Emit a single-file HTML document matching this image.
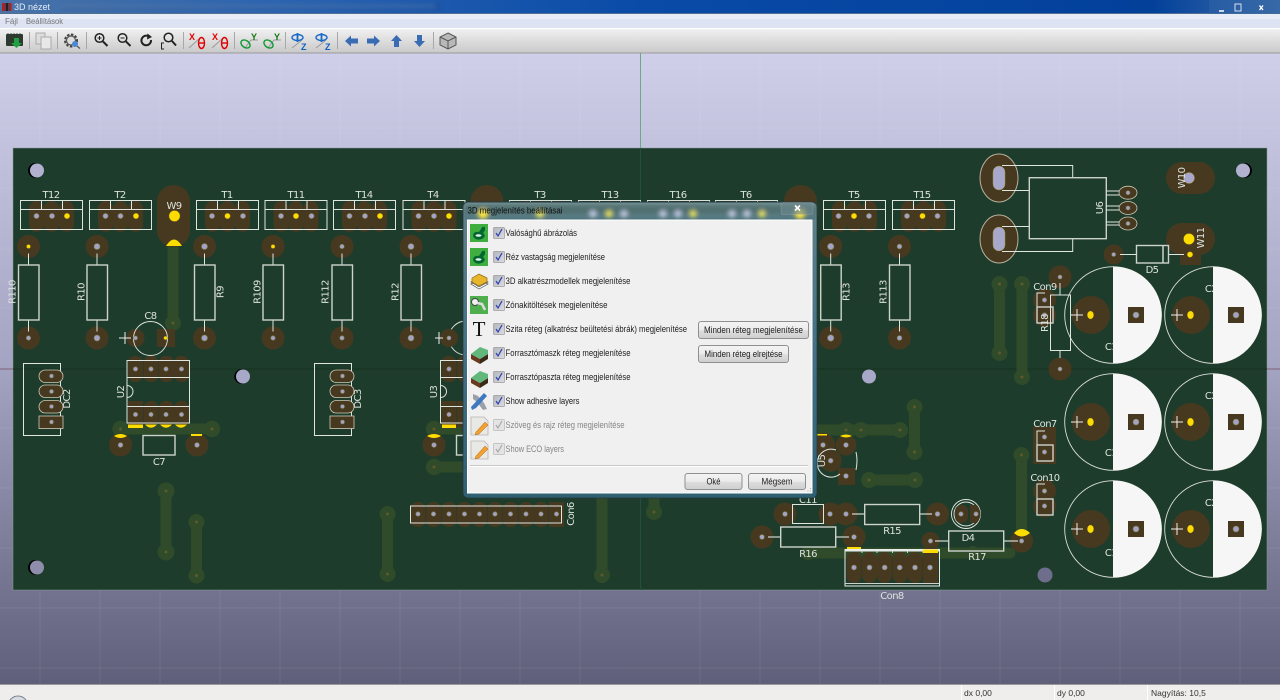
<!DOCTYPE html>
<html><head><meta charset="utf-8"><title>3D nézet</title>
<style>
html,body{margin:0;padding:0;width:1280px;height:700px;overflow:hidden;background:#fff}
svg{display:block}
text{font-family:"Liberation Sans",sans-serif}
.l{font-family:"DejaVu Sans","Liberation Sans",sans-serif;font-size:10px;letter-spacing:-.6px;fill:#dde2dd;text-anchor:middle}
.p{fill:#473920}
.tr{stroke:#2f4b2a;fill:none;stroke-linecap:round}
.v{fill:#2f4b2a}
.s{fill:none;stroke:#dfe5df;stroke-width:1}
.g{fill:none;stroke:#ccd3cc;stroke-width:1.4}
.h{fill:#a3a3c8;stroke:#7d7a45;stroke-width:.6}
.y{fill:#ffdc00;stroke:#8a7a20;stroke-width:.4}
.d{fill:#5f5a2c}
.w{fill:#f6f6f6}
.r{font-size:9px;fill:#1c1c1c}
.rd{font-size:9px;fill:#858585}
.b{font-size:9px;fill:#1c1c1c;text-anchor:middle}
.st{font-size:8.5px;fill:#333}
.sep{stroke:#a8a8a8;stroke-width:1}
</style></head>
<body>
<svg width="1280" height="700" viewBox="0 0 1280 700" xmlns="http://www.w3.org/2000/svg">
<defs>
<linearGradient id="bg" x1="0" y1="0" x2="0" y2="1"><stop offset="0" stop-color="#cfcfe9"/><stop offset=".5" stop-color="#a3a3c2"/><stop offset="1" stop-color="#5f5f7a"/></linearGradient>
<linearGradient id="tb" x1="0" y1="0" x2="0" y2="1"><stop offset="0" stop-color="#f2f2f2"/><stop offset="1" stop-color="#c9c9c9"/></linearGradient>
<linearGradient id="ti" x1="0" y1="0" x2="1" y2="0"><stop offset="0" stop-color="#4a73a8"/><stop offset=".2" stop-color="#2d66b2"/><stop offset=".5" stop-color="#0a4ba8"/><stop offset=".9" stop-color="#02409a"/><stop offset="1" stop-color="#3f6ea8"/></linearGradient>
<linearGradient id="btn" x1="0" y1="0" x2="0" y2="1"><stop offset="0" stop-color="#f4f4f4"/><stop offset=".5" stop-color="#ebebeb"/><stop offset=".55" stop-color="#dcdcdc"/><stop offset="1" stop-color="#cfcfcf"/></linearGradient>
<linearGradient id="gl" x1="0" y1="0" x2="0" y2="1"><stop offset="0" stop-color="#7f9a9e"/><stop offset="1" stop-color="#4f747e"/></linearGradient>
<linearGradient id="side" x1="0" y1="0" x2="0" y2="1"><stop offset="0" stop-color="#62828a"/><stop offset=".5" stop-color="#437084"/><stop offset="1" stop-color="#2f6072"/></linearGradient>
<linearGradient id="cb" x1="0" y1="0" x2="1" y2="1"><stop offset="0" stop-color="#b4b4ba"/><stop offset="1" stop-color="#dcdce4"/></linearGradient>
<filter id="bl" x="-20%" y="-50%" width="140%" height="200%"><feGaussianBlur stdDeviation="2.2"/></filter>
<filter id="bl2" x="-5%" y="-200%" width="110%" height="500%"><feGaussianBlur stdDeviation="2.5"/></filter>

<g id="tp">
<rect class="p" x="9" y="1" width="15" height="31" rx="7.5"/><rect class="p" x="24" y="1" width="15" height="31" rx="7.5"/><rect class="p" x="39" y="1" width="15" height="31" rx="7.5"/>
<rect class="s" x="0.5" y="0.5" width="62" height="29"/><path class="s" d="M0.5 9.5H62.5M21.5 .5V9.5M42.5 .5V9.5"/>
</g>
<g id="res">
<circle class="p" cx="0" cy="0" r="11.5"/><circle class="p" cx="0" cy="91.5" r="11.5"/>
<path class="s" d="M0 7V18.500M0 74V85"/><rect class="g" x="-10" y="18.500" width="20.500" height="55"/>
</g>
<g id="dc">
<rect class="s" x="0.500" y="0.500" width="37" height="72"/>
<rect x="16" y="7" width="24" height="12.500" rx="6.200" fill="#473920" stroke="#cfc9b5" stroke-width=".8"/>
<rect x="16" y="22" width="24" height="12.500" rx="6.200" fill="#473920" stroke="#cfc9b5" stroke-width=".8"/>
<rect x="16" y="37.500" width="24" height="12.500" rx="6.200" fill="#473920" stroke="#cfc9b5" stroke-width=".8"/>
<rect x="16" y="53" width="24" height="12.500" fill="#473920" stroke="#cfc9b5" stroke-width=".8"/>
<circle class="h" cx="28.500" cy="13" r="2"/><circle class="h" cx="28.500" cy="28.500" r="2"/><circle class="h" cx="28.500" cy="43.500" r="2"/><circle class="h" cx="28.500" cy="59" r="2"/>
</g>
<g id="cap">
<circle cx="0" cy="0" r="48.300" fill="none" stroke="#d9dfd9" stroke-width=".9"/>
<path class="w" d="M0 -48.300A48.300 48.300 0 0 1 0 48.300Z"/>
<circle class="p" cx="-22" cy="0" r="19"/>
<path d="M-42 0H-30M-36 -6V6" stroke="#eef0ee" stroke-width="1" fill="none"/>
<ellipse cx="-22.500" cy="0" rx="3.200" ry="4" class="y"/>
<rect class="p" x="15" y="-8" width="16" height="16"/><circle class="h" cx="23" cy="0" r="3"/>
</g>
<g id="cb1"><rect x="-5.500" y="-5.500" width="11" height="11" rx="1" fill="url(#cb)" stroke="#9a9a9a" stroke-width=".7"/><path d="M-3 0L-1 3L3 -4" fill="none" stroke="#2a3fb0" stroke-width="1.200"/></g>
<g id="cb2"><rect x="-5.500" y="-5.500" width="11" height="11" rx="1" fill="#e4e4e4" stroke="#b8b8b8" stroke-width=".7"/><path d="M-3 0L-1 3L3 -4" fill="none" stroke="#a8a8a8" stroke-width="1.200"/></g>
<g id="gic"><rect width="18" height="18" fill="#3fae3f"/><path d="M3 12Q3 7 9 8L11 5Q12 2 15 3L15 6Q14 8 13 9Q17 12 12 15Q5 17 3 12Z" fill="#063"/><ellipse cx="8.500" cy="11.500" rx="3" ry="1.300" fill="#e8f4e8"/></g>
<g id="lay"><path d="M1 10L10 15V20L1 15Z" fill="#6a3a20"/><path d="M10 15L18 10V15L10 20Z" fill="#3a2a1a"/><path d="M1 10L10 3L18 6L18 10L10 15Z" fill="#62b77b"/></g>
<g id="pen"><path d="M1 1H14L18 5V19H1Z" fill="#e8e8e4" stroke="#b4b4b0" stroke-width=".8"/><path d="M6 16L15 6L18 9L9 18L5 19Z" fill="#f0a030" stroke="#c06820" stroke-width=".5"/></g>
</defs>

<!-- background -->
<rect x="0" y="53" width="1280" height="632" fill="url(#bg)"/>
<g stroke="#ffffff" stroke-opacity=".07" stroke-width="1">
<path d="M40 53V685M100 53V685M160 53V685M220 53V685M280 53V685M340 53V685M400 53V685M460 53V685M520 53V685M580 53V685M700 53V685M760 53V685M820 53V685M880 53V685M940 53V685M1000 53V685M1060 53V685M1120 53V685M1180 53V685M1240 53V685"/>
<path d="M0 68H1280M0 128H1280M0 188H1280M0 248H1280M0 308H1280M0 428H1280M0 488H1280M0 548H1280M0 608H1280M0 668H1280"/>
</g>
<path d="M640.500 53V148" stroke="#6ea886" stroke-width="1"/>

<!-- board -->
<rect x="13" y="148" width="1254" height="442" fill="#1e3c2b" stroke="#8a9a98" stroke-width=".5"/>
<path d="M640.500 148V590" stroke="#23503a" stroke-width="1"/>
<path d="M0 369H13" stroke="#806070" stroke-width="1"/><path d="M13 369H1267" stroke="#16301f" stroke-width="1"/><path d="M1267 369H1280" stroke="#806070" stroke-width="1"/>

<!-- mounting holes -->
<g>
<circle cx="35.500" cy="170.500" r="7.500" fill="#000"/><circle cx="37" cy="170.500" r="7" fill="#b2b2d0"/>
<circle cx="241.500" cy="376.500" r="7.300" fill="#000"/><circle cx="243" cy="376.500" r="7" fill="#a8a8c8"/>
<circle cx="35.500" cy="567.500" r="7.500" fill="#000"/><circle cx="37" cy="567.500" r="7" fill="#8e8eac"/>
<circle cx="1244.500" cy="170.500" r="7.500" fill="#000"/><circle cx="1243" cy="170.500" r="7" fill="#b2b2d0"/>
<circle cx="869" cy="376.500" r="7" fill="#a8a8c8"/>
<circle cx="1045" cy="575" r="7.500" fill="#6e6e8c"/>
</g>

<!-- traces -->
<g class="tr" stroke-width="11">
<path d="M173 245V323"/><path d="M120.500 429H212"/><path d="M434 429H470"/><path d="M434 467H470"/>
<path d="M817 430H900"/><path d="M914.500 407V452"/><path d="M869 480H915"/>
<path d="M166 491V552"/><path d="M196.500 522V575.500"/><path d="M387.500 514V574"/><path d="M602 497V575"/>
<path d="M999.500 284V353"/><path d="M1022 284V377"/><path d="M1021.500 455V535"/><path d="M808 553H1010"/>
<path d="M654 497V512"/>
</g>
<g class="v">
<circle cx="173" cy="323" r="8"/><circle cx="120.500" cy="429" r="8.200"/><circle cx="212" cy="429" r="8.200"/><circle cx="434" cy="429" r="8.200"/><circle cx="434" cy="467" r="8.200"/>
<circle cx="846" cy="430" r="8"/><circle cx="861" cy="430" r="8"/><circle cx="900" cy="430" r="8"/><circle cx="914.500" cy="407" r="8"/><circle cx="914.500" cy="452" r="8"/>
<circle cx="869" cy="480" r="8"/><circle cx="915" cy="480" r="8"/><circle cx="166" cy="491" r="8.500"/><circle cx="166" cy="552" r="8.500"/>
<circle cx="196.500" cy="522" r="8"/><circle cx="196.500" cy="575.500" r="8"/><circle cx="387.500" cy="514" r="8"/><circle cx="387.500" cy="574" r="8"/>
<circle cx="602" cy="575" r="8"/><circle cx="654" cy="512" r="8"/>
<circle cx="999.500" cy="284" r="8"/><circle cx="999.500" cy="353" r="8"/><circle cx="1022" cy="284" r="8"/><circle cx="1022" cy="377" r="8"/><circle cx="1021.500" cy="455" r="8"/><circle cx="808" cy="553" r="7"/>
<circle cx="973" cy="553" r="7"/>
</g>
<g class="d">
<circle cx="173" cy="323" r="1.500"/><circle cx="120.500" cy="429" r="1.500"/><circle cx="212" cy="429" r="1.500"/><circle cx="434" cy="429" r="1.500"/><circle cx="434" cy="467" r="1.500"/>
<circle cx="846" cy="430" r="1.500"/><circle cx="861" cy="430" r="1.500"/><circle cx="900" cy="430" r="1.500"/><circle cx="914.500" cy="407" r="1.500"/><circle cx="914.500" cy="452" r="1.500"/>
<circle cx="869" cy="480" r="1.500"/><circle cx="915" cy="480" r="1.500"/><circle cx="166" cy="491" r="1.500"/><circle cx="166" cy="552" r="1.500"/>
<circle cx="196.500" cy="522" r="1.500"/><circle cx="196.500" cy="575.500" r="1.500"/><circle cx="387.500" cy="514" r="1.500"/><circle cx="387.500" cy="574" r="1.500"/>
<circle cx="602" cy="575" r="1.500"/><circle cx="654" cy="512" r="1.500"/>
<circle cx="999.500" cy="284" r="1.500"/><circle cx="999.500" cy="353" r="1.500"/><circle cx="1022" cy="284" r="1.500"/><circle cx="1022" cy="377" r="1.500"/><circle cx="1021.500" cy="455" r="1.500"/>
</g>

<!-- big pills -->
<rect class="p" x="157" y="185" width="33" height="62" rx="16.500"/>
<rect class="p" x="470.500" y="185" width="33" height="62" rx="16.500"/>
<rect class="p" x="784" y="185" width="33" height="62" rx="16.500"/>
<circle cx="174.500" cy="216" r="5.500" class="y"/>
<path d="M166 246Q174 233 182 246Z" fill="#ffdc00"/>
<text class="l" x="174" y="209">W9</text>

<!-- T packages -->
<use href="#tp" x="20" y="200"/><use href="#tp" x="89" y="200"/><use href="#tp" x="196" y="200"/><use href="#tp" x="264.500" y="200"/><use href="#tp" x="333" y="200"/><use href="#tp" x="402.500" y="200"/><use href="#tp" x="509" y="200"/><use href="#tp" x="578" y="200"/><use href="#tp" x="647" y="200"/><use href="#tp" x="715" y="200"/><use href="#tp" x="823" y="200"/><use href="#tp" x="892" y="200"/>
<g>
<circle class="h" cx="36.500" cy="216" r="2.600"/><circle class="h" cx="52" cy="216" r="2.600"/><circle class="y" cx="67" cy="216" r="2.800"/>
<circle class="h" cx="105.500" cy="216" r="2.600"/><circle class="h" cx="120.500" cy="216" r="2.600"/><circle class="y" cx="136" cy="216" r="2.800"/>
<circle class="h" cx="212" cy="216" r="2.600"/><circle class="y" cx="227.500" cy="216" r="2.800"/><circle class="h" cx="243" cy="216" r="2.600"/>
<circle class="h" cx="281" cy="216" r="2.600"/><circle class="y" cx="296" cy="216" r="2.800"/><circle class="h" cx="311.500" cy="216" r="2.600"/>
<circle class="h" cx="349.500" cy="216" r="2.600"/><circle class="h" cx="365" cy="216" r="2.600"/><circle class="y" cx="380" cy="216" r="2.800"/>
<circle class="h" cx="418.500" cy="216" r="2.600"/><circle class="h" cx="434" cy="216" r="2.600"/><circle class="y" cx="449" cy="216" r="2.800"/>
<circle class="h" cx="838.500" cy="216" r="2.600"/><circle class="y" cx="854" cy="216" r="2.800"/><circle class="h" cx="869" cy="216" r="2.600"/>
<circle class="h" cx="907" cy="216" r="2.600"/><circle class="y" cx="922.500" cy="216" r="2.800"/><circle class="h" cx="937.500" cy="216" r="2.600"/>
</g>
<g>
<text class="l" x="51" y="198">T12</text><text class="l" x="120" y="198">T2</text><text class="l" x="227" y="198">T1</text><text class="l" x="296" y="198">T11</text><text class="l" x="364" y="198">T14</text><text class="l" x="433" y="198">T4</text><text class="l" x="540" y="198">T3</text><text class="l" x="610" y="198">T13</text><text class="l" x="678" y="198">T16</text><text class="l" x="746" y="198">T6</text><text class="l" x="854" y="198">T5</text><text class="l" x="922" y="198">T15</text>
</g>

<!-- resistors -->
<use href="#res" x="28.500" y="246.500"/><use href="#res" x="97" y="246.500"/><use href="#res" x="204.500" y="246.500"/><use href="#res" x="273" y="246.500"/><use href="#res" x="342" y="246.500"/><use href="#res" x="411" y="246.500"/><use href="#res" x="830.700" y="246.500"/><use href="#res" x="899.500" y="246.500"/>
<g>
<circle class="y" cx="28.500" cy="246.500" r="2"/><circle class="h" cx="28.500" cy="338" r="2.200"/>
<circle class="h" cx="97" cy="246.500" r="3"/><circle class="h" cx="97" cy="338" r="3"/>
<circle class="h" cx="204.500" cy="246.500" r="3"/><circle class="h" cx="204.500" cy="338" r="3"/>
<circle class="y" cx="273" cy="246.500" r="2"/><circle class="h" cx="273" cy="338" r="2.200"/>
<circle class="h" cx="342" cy="246.500" r="2.200"/><circle class="h" cx="342" cy="338" r="2.200"/>
<circle class="h" cx="411" cy="246.500" r="3"/><circle class="h" cx="411" cy="338" r="3"/>
<circle class="h" cx="830.700" cy="246.500" r="3.200"/><circle class="h" cx="830.700" cy="338" r="3.200"/>
<circle class="h" cx="899.500" cy="246.500" r="2.400"/><circle class="h" cx="899.500" cy="338" r="2.400"/>
</g>
<g>
<text class="l" transform="translate(15.500,292) rotate(-90)">R110</text>
<text class="l" transform="translate(84.500,292) rotate(-90)">R10</text>
<text class="l" transform="translate(223.500,292) rotate(-90)">R9</text>
<text class="l" transform="translate(260.500,292) rotate(-90)">R109</text>
<text class="l" transform="translate(328.500,292) rotate(-90)">R112</text>
<text class="l" transform="translate(398.500,292) rotate(-90)">R12</text>
<text class="l" transform="translate(849.500,292) rotate(-90)">R13</text>
<text class="l" transform="translate(886.500,292) rotate(-90)">R113</text>
</g>

<!-- C8 -->
<path class="p" d="M157 329H175V347H157Z"/><circle class="p" cx="135.500" cy="338" r="9"/>
<circle cx="150.500" cy="338.500" r="17" fill="none" stroke="#dfe5df" stroke-width=".9"/>
<path d="M119 338H131M125 332V344" stroke="#eef0ee" stroke-width="1"/>
<circle class="h" cx="135.500" cy="338" r="2"/><circle class="y" cx="165.500" cy="338" r="1.800"/>
<text class="l" x="150.500" y="319">C8</text>

<!-- U2 -->
<g>
<rect class="p" x="128" y="356" width="15" height="26" rx="7"/><rect class="p" x="143.500" y="356" width="15" height="26" rx="7"/><rect class="p" x="159" y="356" width="15" height="26" rx="7"/><rect class="p" x="174" y="356" width="15" height="26" rx="7"/>
<rect class="p" x="128" y="401" width="15" height="26"/><rect class="p" x="143.500" y="401" width="15" height="26" rx="7"/><rect class="p" x="159" y="401" width="15" height="26" rx="7"/><rect class="p" x="174" y="401" width="15" height="26" rx="7"/>
<rect class="s" x="127" y="360.500" width="62.500" height="62.500"/><path class="s" d="M127 377.500H189.500M127 406.500H189.500"/>
<path class="s" d="M127 385.500A6 6 0 0 1 127 397.500"/>
<rect x="128" y="424.500" width="15" height="3.500" fill="#ffdc00"/><path d="M145 424.500H157Q151 431 145 424.500ZM160 424.500H172Q166 431 160 424.500ZM175 424.500H187Q181 431 175 424.500Z" fill="#ffdc00"/>
<circle class="h" cx="135.500" cy="369" r="2.200"/><circle class="h" cx="151" cy="369" r="2.200"/><circle class="h" cx="166" cy="369" r="2.200"/><circle class="h" cx="181.500" cy="369" r="2.200"/>
<circle class="h" cx="135.500" cy="414.500" r="2.200"/><circle class="h" cx="151" cy="414.500" r="2.200"/><circle class="h" cx="166" cy="414.500" r="2.200"/><circle class="h" cx="181.500" cy="414.500" r="2.200"/>
<text class="l" transform="translate(124,392) rotate(-90)">U2</text>
</g>
<use href="#dc" x="23" y="363"/><text class="l" transform="translate(70,399) rotate(-90)">DC2</text>
<use href="#dc" x="314" y="363"/><text class="l" transform="translate(361,399) rotate(-90)">DC3</text>

<!-- C7 -->
<circle class="p" cx="120.500" cy="445" r="11.500"/><circle class="p" cx="197" cy="445" r="11.500"/>
<path d="M114 436Q120.500 432 127 436Q120.500 440 114 436Z" fill="#ffdc00"/><rect x="191" y="434" width="11" height="2" fill="#ffdc00"/>
<rect class="g" x="143" y="435.500" width="32" height="19.500"/>
<circle class="h" cx="120.500" cy="445" r="2.400"/><circle class="h" cx="197" cy="445" r="2.400"/>
<text class="l" x="159" y="465">C7</text>

<!-- U3 area -->
<circle cx="466" cy="338" r="17" fill="none" stroke="#dfe5df" stroke-width=".9"/>
<circle class="p" cx="449" cy="338" r="9"/>
<path d="M435 338H443M439 332V344" stroke="#eef0ee" stroke-width="1"/>
<circle class="h" cx="449" cy="338" r="2"/>
<rect class="p" x="441.500" y="356" width="15" height="26" rx="7"/><rect class="p" x="441.500" y="401" width="15" height="26"/><rect class="p" x="457" y="356" width="15" height="26" rx="7"/><rect class="p" x="457" y="401" width="15" height="26"/>
<rect class="s" x="440.500" y="360.500" width="40" height="62.500"/><path class="s" d="M440.500 377.500H480M440.500 406.500H480"/>
<path class="s" d="M440.500 385.500A6 6 0 0 1 440.500 397.500"/>
<circle class="h" cx="449" cy="369" r="2.200"/><circle class="h" cx="449" cy="414.500" r="2.200"/>
<text class="l" transform="translate(437,392) rotate(-90)">U3</text>
<rect x="442" y="424.500" width="14" height="3.500" fill="#ffdc00"/>
<circle class="p" cx="434" cy="445" r="11.500"/>
<path d="M427 436Q434 432 441 436Q434 440 427 436Z" fill="#ffdc00"/>
<circle class="h" cx="434" cy="445" r="2.400"/>
<rect class="g" x="456.500" y="435.500" width="20" height="19.500"/>

<!-- Con6 -->
<g>
<rect class="p" x="410.500" y="502" width="15" height="25" rx="7"/><rect class="p" x="426" y="502" width="15" height="25" rx="7"/><rect class="p" x="441.500" y="502" width="15" height="25" rx="7"/><rect class="p" x="457" y="502" width="15" height="25" rx="7"/><rect class="p" x="472" y="502" width="15" height="25" rx="7"/><rect class="p" x="487.500" y="502" width="15" height="25" rx="7"/><rect class="p" x="503" y="502" width="15" height="25" rx="7"/><rect class="p" x="518.500" y="502" width="15" height="25" rx="7"/><rect class="p" x="533.500" y="502" width="15" height="25" rx="7"/><rect class="p" x="549" y="502" width="15" height="25"/>
<rect class="s" x="410.500" y="506" width="151" height="17"/>
<circle class="h" cx="418" cy="514" r="2.200"/><circle class="h" cx="433.500" cy="514" r="2.200"/><circle class="h" cx="449" cy="514" r="2.200"/><circle class="h" cx="464.500" cy="514" r="2.200"/><circle class="h" cx="479.500" cy="514" r="2.200"/><circle class="h" cx="495" cy="514" r="2.200"/><circle class="h" cx="510.500" cy="514" r="2.200"/><circle class="h" cx="526" cy="514" r="2.200"/><circle class="h" cx="541" cy="514" r="2.200"/><circle class="h" cx="556.500" cy="514" r="2.200"/>
<text class="l" transform="translate(574,514) rotate(-90)">Con6</text>
</g>

<!-- U5 region -->
<circle class="p" cx="823" cy="445" r="12"/><circle class="p" cx="846" cy="445" r="10.500"/><circle class="p" cx="830.700" cy="460.700" r="11"/><rect class="p" x="838" y="468" width="17" height="17"/>
<rect x="817" y="434" width="10" height="1.500" fill="#ffdc00"/><path d="M840 436Q846 433 852 436Q846 439 840 436Z" fill="#ffdc00"/>
<path class="s" d="M836 450A14 14 0 1 0 840 474M856 452Q858 460 856 470" />
<circle class="h" cx="823" cy="445" r="2.400"/><circle class="h" cx="846" cy="445" r="2.400"/><circle class="h" cx="830.700" cy="460.700" r="2.400"/><circle class="h" cx="846" cy="476" r="2.400"/>
<text class="l" transform="translate(825,461) rotate(-90)">U5</text>

<!-- C11, R15, D4, R16, R17 -->
<circle class="p" cx="785" cy="514" r="11.500"/><circle class="p" cx="830" cy="514" r="11.500"/><circle class="p" cx="846" cy="514" r="11.500"/><circle class="p" cx="937.500" cy="514" r="11.500"/>
<rect class="s" x="792.500" y="504.500" width="31" height="19"/>
<text class="l" x="808" y="503">C11</text>
<rect class="g" x="864.700" y="504.500" width="55" height="20"/><path d="M852 514H864M920 514H932" stroke="#ccd3cc" stroke-width="1.200"/>
<text class="l" x="892" y="534">R15</text>
<circle class="h" cx="785" cy="514" r="2.400"/><circle class="h" cx="830" cy="514" r="2.400"/><circle class="h" cx="846" cy="514" r="2.400"/><circle class="h" cx="937.500" cy="514" r="2.400"/>
<circle cx="966" cy="514" r="14.500" fill="none" stroke="#e4e9e4" stroke-width=".9"/><circle cx="966" cy="514" r="12" fill="none" stroke="#e4e9e4" stroke-width=".9"/>
<rect class="p" x="955" y="505" width="13" height="18" rx="6"/><path class="p" d="M970 505H977Q984 514 977 523H970Z"/>
<circle class="h" cx="961" cy="514" r="2.200"/><circle class="h" cx="976" cy="514" r="2.200"/>
<text class="l" x="968" y="541">D4</text>
<circle class="p" cx="930.500" cy="541" r="9"/><circle class="p" cx="1021.600" cy="541" r="11.500"/>
<path d="M935 541H949M1004 541H1018" stroke="#ccd3cc" stroke-width="1.200"/>
<rect class="g" x="948.700" y="531" width="55" height="20"/>
<circle class="h" cx="930.500" cy="541" r="2.200"/><circle class="h" cx="1021.600" cy="541" r="2.200"/>
<path d="M1014 533Q1021.600 525 1030 533Q1021.600 540 1014 533Z" fill="#ffdc00"/>
<text class="l" x="977" y="560">R17</text>
<circle class="p" cx="762" cy="537" r="11.500"/><circle class="p" cx="854" cy="537" r="11.500"/>
<path d="M768 537H781M836 537H849" stroke="#aeb6ae" stroke-width="1.600"/>
<rect class="g" x="780.700" y="527" width="55" height="20"/>
<circle class="h" cx="762" cy="537" r="2.400"/><circle class="h" cx="854" cy="537" r="2.400"/>
<text class="l" x="808" y="557">R16</text>

<!-- Con8 -->
<g>
<rect class="p" x="846.500" y="552" width="15" height="31" rx="7.500"/><rect class="p" x="862" y="552" width="15" height="31" rx="7.500"/><rect class="p" x="877" y="552" width="15" height="31" rx="7.500"/><rect class="p" x="892.500" y="552" width="15" height="31" rx="7.500"/><rect class="p" x="907.500" y="552" width="15" height="31" rx="7.500"/><rect class="p" x="923" y="552" width="15" height="31"/>
<rect x="845" y="549.500" width="94.500" height="36.500" fill="none" stroke="#e8ece8" stroke-width="1"/><path d="M845 550.500H939.500" stroke="#e8ece8" stroke-width="2"/><path d="M845 583.500H939.500" stroke="#ccd3cc" stroke-width="1"/>
<path d="M862 549V553M877 549V553M892.500 549V553M907.500 549V553M923 549V553" stroke="#e8ece8" stroke-width=".8"/>
<rect x="923" y="549.500" width="15" height="3.500" fill="#ffdc00"/><rect x="847" y="547" width="14" height="2" fill="#ffdc00"/>
<circle class="h" cx="854" cy="567.500" r="2.500"/><circle class="h" cx="869.500" cy="567.500" r="2.500"/><circle class="h" cx="884.700" cy="567.500" r="2.500"/><circle class="h" cx="899.700" cy="567.500" r="2.500"/><circle class="h" cx="915" cy="567.500" r="2.500"/><circle class="h" cx="930" cy="567.500" r="2.500"/>
<text class="l" x="892" y="599">Con8</text>
</g>

<!-- U6 -->
<g>
<ellipse class="p" cx="999" cy="178" rx="19" ry="24" stroke="#b8b2a0" stroke-width="1"/>
<ellipse class="p" cx="999" cy="239" rx="19" ry="24" stroke="#b8b2a0" stroke-width="1"/>
<rect x="993" y="166" width="12" height="24" rx="6" fill="#a8a8cc" stroke="#a09030" stroke-width=".5"/>
<rect x="993" y="227" width="12" height="24" rx="6" fill="#a8a8cc" stroke="#a09030" stroke-width=".5"/>
<path class="s" d="M1002 165.500H1072.700V177.700M1002 190.500H1029.300M1002 251.500H1072.700V239M1002 226.500H1029.300"/>
<rect class="g" x="1029.300" y="177.700" width="77" height="61"/>
<ellipse class="p" cx="1128" cy="192.700" rx="9" ry="6.500" stroke="#cfc9b5" stroke-width=".8"/>
<ellipse class="p" cx="1128" cy="208" rx="9" ry="6.500" stroke="#cfc9b5" stroke-width=".8"/>
<ellipse class="p" cx="1128" cy="223.500" rx="9" ry="6.500" stroke="#cfc9b5" stroke-width=".8"/>
<path class="s" d="M1106 191H1119M1106 195H1119M1106 206H1119M1106 210H1119M1106 222H1119M1106 225H1119"/>
<circle class="h" cx="1128" cy="192.700" r="2"/><circle class="h" cx="1128" cy="208" r="2"/><circle class="h" cx="1128" cy="223.500" r="2"/>
<text class="l" transform="translate(1103,208) rotate(-90)">U6</text>
</g>

<!-- W10 W11 D5 -->
<rect class="p" x="1166" y="162" width="49" height="32" rx="16"/>
<circle cx="1189" cy="178" r="5.500" fill="#a8a8cc" stroke="#a09030" stroke-width=".5"/>
<text class="l" transform="translate(1185,178) rotate(-90)">W10</text>
<rect class="p" x="1166" y="223" width="49" height="32" rx="16"/>
<rect class="p" x="1180" y="250" width="21" height="15"/>
<circle cx="1189" cy="239" r="5.500" class="y"/><circle cx="1190" cy="254.500" r="2.800" class="y"/>
<text class="l" transform="translate(1204,238) rotate(-90)">W11</text>
<circle class="p" cx="1113.700" cy="254.500" r="10"/>
<circle class="h" cx="1113.700" cy="254.500" r="2"/>
<path class="s" d="M1120 254.500H1137M1168 254.500H1184"/>
<rect class="g" x="1136.500" y="245.500" width="32" height="17.500"/><path d="M1163 245.500V263" stroke="#ccd3cc" stroke-width="1.500"/>
<text class="l" x="1152" y="273">D5</text>

<!-- R18 + Con9 -->
<circle class="p" cx="1060" cy="277" r="11.500"/><circle class="p" cx="1060" cy="369" r="11.500"/>
<circle class="p" cx="1044.500" cy="300" r="11.500"/><circle class="p" cx="1044.500" cy="315" r="11.500"/>
<path class="s" d="M1060 283V295M1060 351V358"/>
<path class="s" d="M1037 307V293H1045M1037 307"/>
<rect class="g" x="1037" y="307" width="16" height="16"/>
<circle class="h" cx="1044.500" cy="300" r="2.200"/><circle class="h" cx="1044.500" cy="315" r="2.200"/>
<circle class="h" cx="1060" cy="277" r="2"/><circle class="h" cx="1060" cy="369" r="2"/>
<text class="l" x="1045" y="290">Con9</text>

<!-- big caps -->
<use href="#cap" x="1113" y="315"/><use href="#cap" x="1213" y="315"/><use href="#cap" x="1113" y="422"/><use href="#cap" x="1213" y="422"/><use href="#cap" x="1113" y="529"/><use href="#cap" x="1213" y="529"/>
<rect class="s" x="1050.500" y="295" width="20" height="55.500"/>
<text class="l" transform="translate(1048,323) rotate(-90)">R18</text>
<g>
<text class="l" x="1111" y="350">C1</text><text class="l" x="1211" y="292">C2</text>
<text class="l" x="1111" y="456">C1</text><text class="l" x="1211" y="399">C2</text>
<text class="l" x="1111" y="556">C1</text><text class="l" x="1211" y="506">C2</text>
</g>
<path class="w" d="M1113.500 266.700A48.300 48.300 0 0 1 1113.500 363.300ZM1213.500 266.700A48.300 48.300 0 0 1 1213.500 363.300ZM1113.500 373.700A48.300 48.300 0 0 1 1113.500 470.300ZM1213.500 373.700A48.300 48.300 0 0 1 1213.500 470.300ZM1113.500 480.700A48.300 48.300 0 0 1 1113.500 577.300ZM1213.500 480.700A48.300 48.300 0 0 1 1213.500 577.300Z"/>
<g>
<rect class="p" x="1128" y="307" width="16" height="16"/><circle class="h" cx="1136" cy="315" r="3"/>
<rect class="p" x="1228" y="307" width="16" height="16"/><circle class="h" cx="1236" cy="315" r="3"/>
<rect class="p" x="1128" y="414" width="16" height="16"/><circle class="h" cx="1136" cy="422" r="3"/>
<rect class="p" x="1228" y="414" width="16" height="16"/><circle class="h" cx="1236" cy="422" r="3"/>
<rect class="p" x="1128" y="521" width="16" height="16"/><circle class="h" cx="1136" cy="529" r="3"/>
<rect class="p" x="1228" y="521" width="16" height="16"/><circle class="h" cx="1236" cy="529" r="3"/>
</g>

<!-- Con7 Con10 -->
<rect class="p" x="1033" y="427" width="23" height="37"/>
<path class="s" d="M1037 445V431H1045"/><rect class="g" x="1037" y="445" width="16" height="16"/>
<circle class="h" cx="1044.500" cy="437" r="2.200"/><circle class="h" cx="1044.500" cy="452" r="2.200"/>
<text class="l" x="1045" y="427">Con7</text>
<circle class="p" cx="1044.500" cy="491" r="11.500"/><circle class="p" cx="1044.500" cy="506" r="11.500"/>
<path class="s" d="M1037 499V484H1045"/><rect class="g" x="1037" y="499" width="16" height="16"/>
<circle class="h" cx="1044.500" cy="491" r="2.200"/><circle class="h" cx="1044.500" cy="506" r="2.200"/>
<text class="l" x="1045" y="481">Con10</text>

<!-- DIALOG -->
<rect x="463" y="202" width="354" height="296" rx="5" fill="url(#side)" stroke="#26343c" stroke-width=".7"/>
<rect x="464" y="203" width="352" height="17" rx="4" fill="url(#gl)"/>
<g filter="url(#bl)">
<rect x="464" y="204" width="352" height="10" fill="#3a5a55" opacity=".55"/>
<circle cx="483" cy="214" r="5" fill="#ffe640"/><circle cx="540" cy="214" r="4" fill="#e6e060"/><circle cx="593" cy="214" r="3.500" fill="#c0c8e0"/><circle cx="609" cy="214" r="3.500" fill="#e6e060"/><circle cx="624" cy="214" r="3.500" fill="#c0c8e0"/><circle cx="663" cy="214" r="3.500" fill="#c0c8e0"/><circle cx="678" cy="214" r="3.500" fill="#c0c8e0"/><circle cx="693" cy="214" r="3.500" fill="#e6e060"/><circle cx="732" cy="214" r="3.500" fill="#c0c8e0"/><circle cx="747" cy="214" r="3.500" fill="#c0c8e0"/><circle cx="762" cy="214" r="3.500" fill="#e6e060"/><circle cx="800" cy="214" r="5" fill="#ffe640"/>
</g>
<text x="467.500" y="213.500" style="font-size:9px;fill:#111" textLength="95" lengthAdjust="spacingAndGlyphs">3D megjelenítés beállításai</text>
<rect x="781" y="202.500" width="32" height="12" rx="2" fill="#6f8a90" opacity=".6" stroke="#cfd8da" stroke-width=".5" stroke-opacity=".6"/>
<path d="M795 205.500L800 210.500M800 205.500L795 210.500" stroke="#fff" stroke-width="1.600"/>
<rect x="467.500" y="220" width="344.500" height="273" fill="#f0f0f0" stroke="#fff" stroke-width="1"/>

<!-- dialog icons -->
<use href="#gic" x="470" y="224"/><use href="#gic" x="470" y="248"/>
<g transform="translate(470,272)"><path d="M1 12L9 8L18 12L9 17Z" fill="#fff" stroke="#555" stroke-width=".7"/><path d="M1 10L9 6L18 10L9 15Z" fill="#fff" stroke="#555" stroke-width=".7"/><path d="M2 6L9 2L17 6V10L9 14L2 10Z" fill="#e9b52a" stroke="#8a6a10" stroke-width=".7"/></g>
<g transform="translate(470,296)"><rect width="18" height="18" fill="#4faf4f"/><circle cx="5" cy="6" r="3.500" fill="#f0f0f0" stroke="#444"/><path d="M7 7L12 8L15 14" fill="none" stroke="#ddd" stroke-width="2.500"/></g>
<text x="479" y="336" style="font-family:'Liberation Serif',serif;font-size:21px;fill:#111;text-anchor:middle">T</text>
<use href="#lay" x="470" y="344"/><use href="#lay" x="470" y="368"/>
<g transform="translate(470,392)"><path d="M3 2L8 4L14 11L17 17L13 18L7 10L3 7Z" fill="#9aa0a8"/><path d="M14 1L17 4L6 16L2 18L1 15Z" fill="#3e78c0"/></g>
<use href="#pen" x="470" y="416"/><use href="#pen" x="470" y="440"/>

<!-- checkboxes -->
<use href="#cb1" x="499" y="233"/><use href="#cb1" x="499" y="257"/><use href="#cb1" x="499" y="281"/><use href="#cb1" x="499" y="305"/><use href="#cb1" x="499" y="329"/><use href="#cb1" x="499" y="353"/><use href="#cb1" x="499" y="377"/><use href="#cb1" x="499" y="401"/><use href="#cb2" x="499" y="425"/><use href="#cb2" x="499" y="449"/>

<text class="r" x="505.500" y="236" textLength="71.500" lengthAdjust="spacingAndGlyphs">Valósághű ábrázolás</text>
<text class="r" x="505.500" y="260" textLength="99.500" lengthAdjust="spacingAndGlyphs">Réz vastagság megjelenítése</text>
<text class="r" x="505.500" y="284" textLength="125" lengthAdjust="spacingAndGlyphs">3D alkatrészmodellek megjelenítése</text>
<text class="r" x="505.500" y="308" textLength="102" lengthAdjust="spacingAndGlyphs">Zónakitöltések megjelenítése</text>
<text class="r" x="505.500" y="332" textLength="181.500" lengthAdjust="spacingAndGlyphs">Szita réteg (alkatrész beültetési ábrák) megjelenítése</text>
<text class="r" x="505.500" y="356" textLength="125" lengthAdjust="spacingAndGlyphs">Forrasztómaszk réteg megjelenítése</text>
<text class="r" x="505.500" y="380" textLength="125" lengthAdjust="spacingAndGlyphs">Forrasztópaszta réteg megjelenítése</text>
<text class="r" x="505.500" y="404" textLength="74" lengthAdjust="spacingAndGlyphs">Show adhesive layers</text>
<text class="rd" x="505.500" y="428" textLength="119" lengthAdjust="spacingAndGlyphs">Szöveg és rajz réteg megjelenítése</text>
<text class="rd" x="505.500" y="452" textLength="58.500" lengthAdjust="spacingAndGlyphs">Show ECO layers</text>

<!-- buttons -->
<rect x="698.500" y="321.500" width="110" height="17" rx="2.500" fill="url(#btn)" stroke="#8e8f8f" stroke-width="1"/>
<text class="b" x="753.500" y="333" textLength="99" lengthAdjust="spacingAndGlyphs">Minden réteg megjelenítése</text>
<rect x="698.500" y="345.500" width="90" height="17" rx="2.500" fill="url(#btn)" stroke="#8e8f8f" stroke-width="1"/>
<text class="b" x="743.500" y="357" textLength="78" lengthAdjust="spacingAndGlyphs">Minden réteg elrejtése</text>
<path d="M470 465.500H808" stroke="#c8c8c8" stroke-width="1"/><path d="M470 466.500H808" stroke="#fff" stroke-width="1"/>
<rect x="685" y="473.500" width="57" height="16" rx="2.500" fill="url(#btn)" stroke="#8e8f8f" stroke-width="1"/>
<text class="b" x="713.500" y="484.500" textLength="14" lengthAdjust="spacingAndGlyphs">Oké</text>
<rect x="748.500" y="473.500" width="57" height="16" rx="2.500" fill="url(#btn)" stroke="#8e8f8f" stroke-width="1"/>
<text class="b" x="777" y="484.500" textLength="31" lengthAdjust="spacingAndGlyphs">Mégsem</text>
<path d="M810 491h1M807.500 491h1M810 488.500h1" stroke="#b0b0b0" stroke-width="1"/>

<!-- title bar -->
<rect x="0" y="0" width="1280" height="14" fill="url(#ti)"/>
<g filter="url(#bl2)" opacity=".35">
<rect x="60" y="3" width="380" height="7" fill="#1a3f78"/>
<rect x="60" y="5" width="375" height="2" fill="#7ba0cc"/>
</g>
<rect x="0" y="13" width="1280" height="1" fill="#52708f"/>
<g><rect x="2" y="3" width="3" height="8" fill="#b02020"/><rect x="5.500" y="3" width="3" height="8" fill="#222"/><rect x="9" y="3" width="2.500" height="8" fill="#b02020"/></g>
<text x="14" y="10" style="font-size:9px;fill:#e6ecf4">3D nézet</text>
<rect x="1209" y="0" width="71" height="14" fill="#2f63a6" opacity=".5"/>
<path d="M1219 11H1224" stroke="#fff" stroke-width="1.500"/>
<rect x="1235" y="4" width="6" height="7" fill="none" stroke="#d8e0f0" stroke-width="1"/>
<path d="M1259.500 5.500L1263 10M1263 5.500L1259.500 10" stroke="#fff" stroke-width="1.400"/>

<!-- menu bar -->
<rect x="0" y="14" width="1280" height="14" fill="#dde3f3"/>
<rect x="0" y="14" width="1280" height="5" fill="#e8ecf7"/>
<text x="5" y="24" style="font-size:8px;fill:#777">Fájl</text>
<text x="26" y="24" style="font-size:8px;fill:#777" textLength="37" lengthAdjust="spacingAndGlyphs">Beállítások</text>

<!-- toolbar -->
<rect x="0" y="28" width="1280" height="25" fill="url(#tb)"/>
<path d="M0 28.500H1280" stroke="#fff" stroke-width="1"/><path d="M0 53H1280" stroke="#9a9a9a" stroke-width="1"/>
<path class="sep" d="M29.500 32V49M57.500 32V49M86.500 32V49M183.500 32V49M234.500 32V49M285.500 32V49M337.500 32V49M433.500 32V49"/>
<!-- load -->
<rect x="6" y="34" width="17" height="12" rx="1" fill="#2d3a30"/><path d="M8 33V34M11 33V34M14 33V34M17 33V34M20 33V34" stroke="#555" stroke-width="1"/>
<path d="M14 38H19V43H22L16.500 48L11 43H14Z" fill="#20a040"/>
<!-- copy -->
<rect x="36" y="33" width="9" height="11" fill="#ddd" stroke="#aaa"/><rect x="41" y="37" width="10" height="12" fill="#e8e8e8" stroke="#aaa"/>
<!-- gear -->
<circle cx="71" cy="40.500" r="6" fill="#ddd" stroke="#444" stroke-width="2" stroke-dasharray="2.500 1.500"/><circle cx="71" cy="40.500" r="4.500" fill="none" stroke="#555" stroke-width="1.200"/><circle cx="75" cy="44" r="3" fill="#4a88d8"/><path d="M77 46L80 48.500" stroke="#555" stroke-width="1.200"/>
<!-- zoom in/out/refresh/fit -->
<g fill="none" stroke="#222" stroke-width="1.500">
<circle cx="99.500" cy="38" r="4.300"/><path d="M103 41.500L107.500 46" stroke-width="2"/><path d="M97.500 38H101.500M99.500 36V40" stroke-width="1"/>
<circle cx="122.500" cy="38" r="4.300"/><path d="M126 41.500L130.500 46" stroke-width="2"/><path d="M120.500 38H124.500" stroke-width="1"/>
<path d="M151 40A4.800 4.800 0 1 1 148 36" stroke-width="2"/>
<circle cx="168.500" cy="37.500" r="4.300"/><path d="M172 41L176 45.500" stroke-width="2"/><path d="M164 43H161.500V49H164" stroke-width="1"/>
</g>
<path d="M147.500 33.500L152 37L147 39.500Z" fill="#222"/>
<!-- rot X -->
<g fill="none" stroke="#999" stroke-width="1"><path d="M189 48L200 38M212 48L223 38"/><path d="M245 48L251 40H258M268 48L274 40H281"/><path d="M292 48L302 40M316 48L326 40"/></g>
<text x="189" y="40" style="font-size:9px;fill:#e00000;font-weight:bold">X</text><text x="212" y="40" style="font-size:9px;fill:#e00000;font-weight:bold">X</text>
<g fill="none" stroke="#e00000" stroke-width="1.400"><ellipse cx="201.500" cy="43" rx="3" ry="5.500"/><path d="M198 43H205"/><ellipse cx="224.500" cy="43" rx="3" ry="5.500"/><path d="M221 43H228"/></g>
<!-- rot Y -->
<text x="251" y="40" style="font-size:9px;fill:#107810;font-weight:bold">Y</text><text x="274" y="40" style="font-size:9px;fill:#107810;font-weight:bold">Y</text>
<g fill="none" stroke="#109a30" stroke-width="1.400"><ellipse cx="245.500" cy="44" rx="5" ry="3.500" transform="rotate(35 245.500 44)"/><ellipse cx="268.500" cy="44" rx="5" ry="3.500" transform="rotate(35 268.500 44)"/></g>
<!-- rot Z -->
<text x="301" y="50" style="font-size:9px;fill:#1060c0;font-weight:bold">Z</text><text x="325" y="50" style="font-size:9px;fill:#1060c0;font-weight:bold">Z</text>
<g fill="none" stroke="#1a6ac8" stroke-width="1.400"><ellipse cx="297.500" cy="37.500" rx="5.500" ry="3"/><ellipse cx="321.500" cy="37.500" rx="5.500" ry="3"/><path d="M297.500 33V42M321.500 33V42" stroke-width="1.800"/></g>
<!-- arrows -->
<g fill="#3a6cb4">
<path d="M345 41L351 35.500V38.500H358V43.500H351V46.500Z"/>
<path d="M380 41L374 35.500V38.500H367V43.500H374V46.500Z"/>
<path d="M396.500 35L402 41H399V47H394V41H391Z"/>
<path d="M419.500 47L425 41H422V35H417V41H414Z"/>
</g>
<!-- cube -->
<path d="M448 33L456 37V45L448 49L440 45V37Z" fill="#b8b8b8" stroke="#555" stroke-width="1"/><path d="M440 37L448 41L456 37M448 41V49" fill="none" stroke="#555" stroke-width="1"/>

<!-- status bar -->
<rect x="0" y="684" width="1280" height="16" fill="#f0eeec"/>
<path d="M0 684.500H1280" stroke="#9a9a9a" stroke-width="1"/>
<path d="M961.500 685V700M1054.500 685V700M1147.500 685V700" stroke="#fff" stroke-width="1"/>
<text class="st" x="964" y="696">dx 0,00</text>
<text class="st" x="1057" y="696">dy 0,00</text>
<text class="st" x="1151" y="696">Nagyítás: 10,5</text>
<circle cx="18" cy="706" r="10" fill="#d6dbe2" stroke="#7a8490" stroke-width="1"/>
</svg>
</body></html>
